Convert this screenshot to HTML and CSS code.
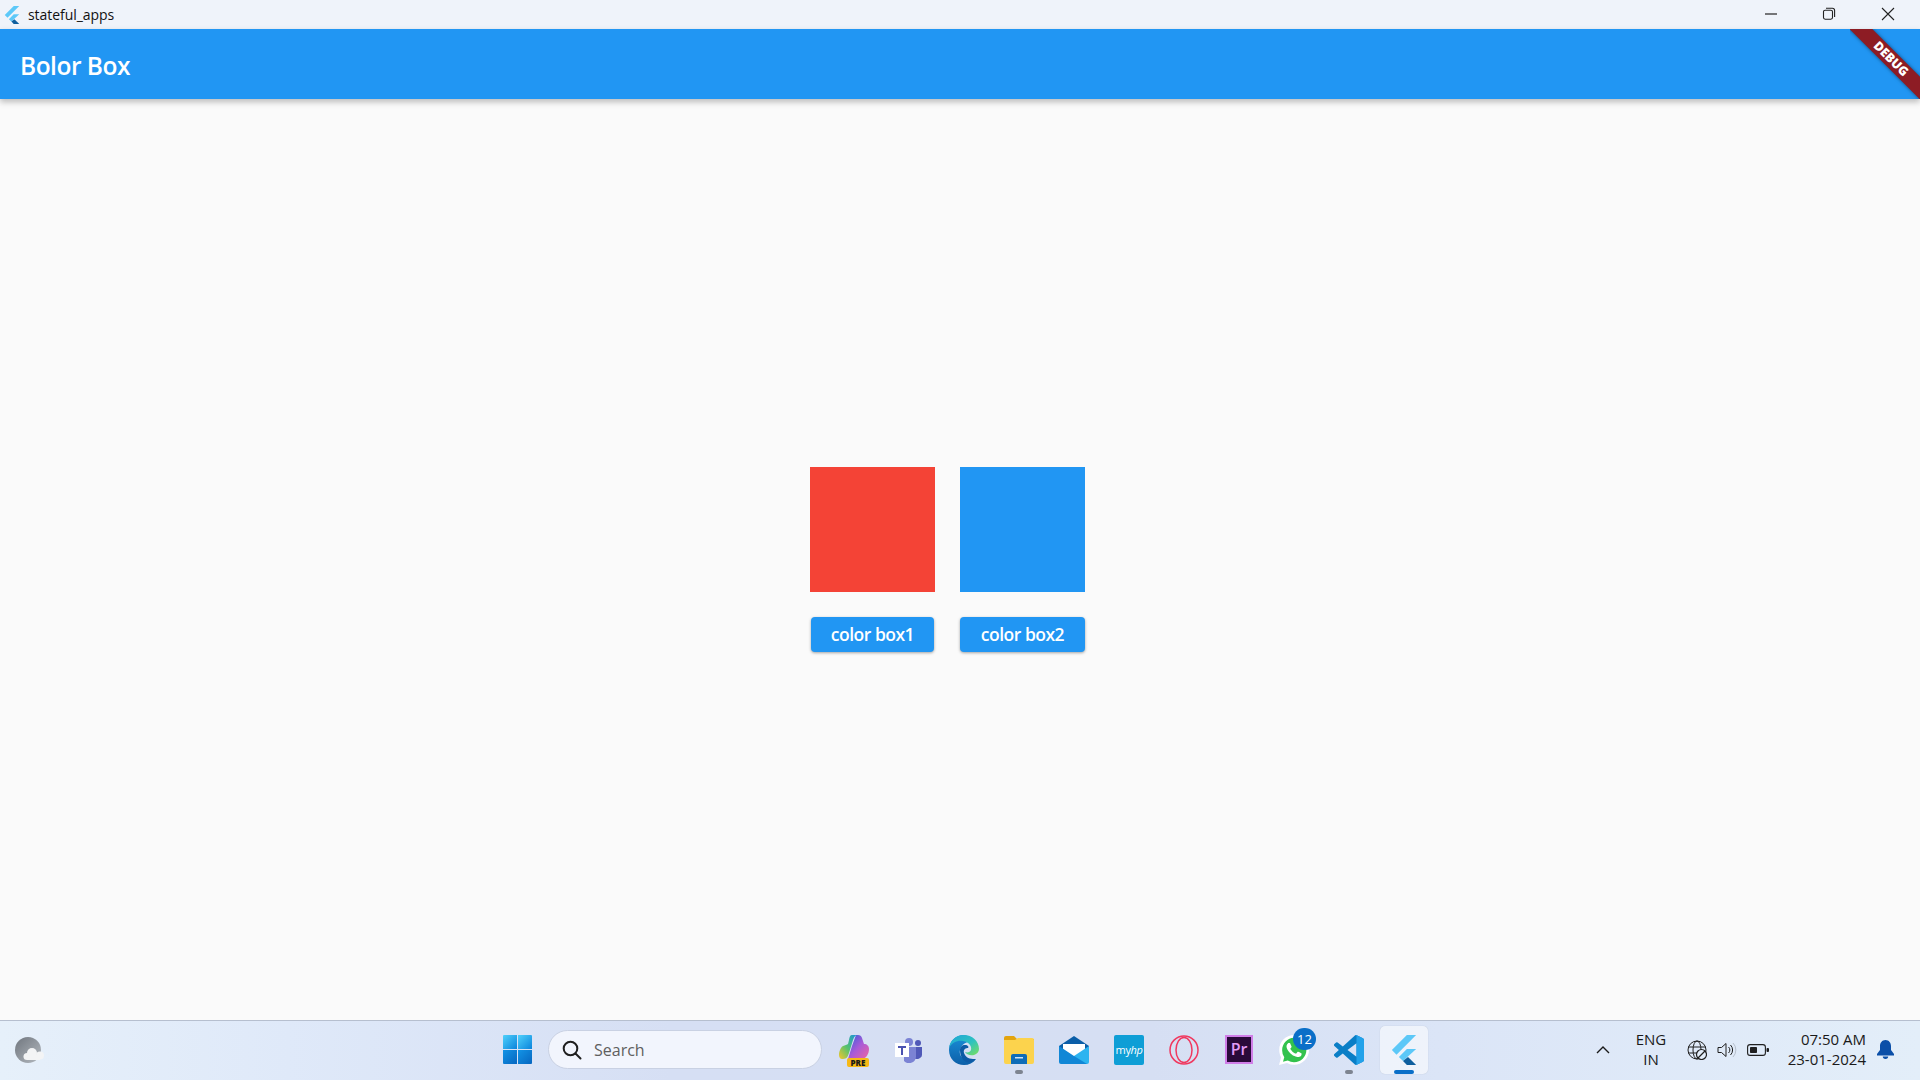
FILE: index.html
```html
<!DOCTYPE html>
<html lang="en">
<head>
    <meta charset="UTF-8">
    <meta name="viewport" content="width=device-width, initial-scale=1.0">
    <title>stateful_apps</title>
    <link rel="stylesheet" href="styles.css">
</head>
<body>

    <!-- Window title bar -->
    <div class="titlebar">
        <svg class="title-logo" viewBox="0 0 24 24">
            <path fill="#5cc8f8" d="M14.3 0L2.3 12 6 15.7 21.7 0z"/>
            <path fill="#5cc8f8" d="M14.3 11.1L7.9 17.500l3.300 3.300 10.500-9.700z"/>
            <path fill="#0f5f9e" d="M11.200 20.800l3.100 3.200h7.400l-6.500-6.500z"/>
        </svg>
        <span class="title-text">stateful_apps</span>
        <div class="window-controls">
            <div class="control">
                <svg width="14" height="14" viewBox="0 0 14 14"><path d="M1 7h12" stroke="#222" stroke-width="1.2"/></svg>
            </div>
            <div class="control">
                <svg width="14" height="14" viewBox="0 0 14 14" fill="none" stroke="#222" stroke-width="1.1"><rect x="1.500" y="3.200" width="9" height="9" rx="1.600"/><path d="M4 1.300h6.400a2.200 2.200 0 0 1 2.200 2.200V10"/></svg>
            </div>
            <div class="control">
                <svg width="14" height="14" viewBox="0 0 14 14"><path d="M1 1l12 12M13 1L1 13" stroke="#222" stroke-width="1.1"/></svg>
            </div>
        </div>
    </div>

    <!-- Flutter app -->
    <header class="appbar">
        <h1 class="appbar-title">Bolor Box</h1>
        <div class="debug-banner">
            <div class="debug-ribbon">DEBUG</div>
        </div>
    </header>

    <main class="content">
        <div class="box-row">
            <div class="box-col">
                <div class="box box-red"></div>
                <button class="box-btn box-btn-first">color box1</button>
            </div>
            <div class="box-col">
                <div class="box box-blue"></div>
                <button class="box-btn">color box2</button>
            </div>
        </div>
    </main>

    <!-- Windows taskbar -->
    <footer class="taskbar">
        <svg class="weather" viewBox="0 0 30 28">
            <defs>
                <linearGradient id="moon" x1="0" y1="0" x2="1" y2="1"><stop offset="0" stop-color="#70767e"/><stop offset="1" stop-color="#b4bac0"/></linearGradient>
            </defs>
            <circle cx="13" cy="13" r="13" fill="url(#moon)"/>
            <g fill="#f3f4f5">
                <circle cx="17" cy="16" r="5"/>
                <circle cx="12" cy="19.500" r="3.500"/>
                <circle cx="25" cy="18.500" r="4"/>
                <rect x="12" y="18" width="13" height="5" />
            </g>
        </svg>

        <div class="apps">
            <div class="app">
                <svg width="29" height="29" viewBox="0 0 29 29">
                    <defs>
                        <linearGradient id="winA" x1="0" y1="0" x2="1" y2="1"><stop offset="0" stop-color="#4fd0fb"/><stop offset="1" stop-color="#0a84dc"/></linearGradient>
                        <linearGradient id="winB" x1="0" y1="0" x2="1" y2="1"><stop offset="0" stop-color="#1394e6"/><stop offset="1" stop-color="#0666c0"/></linearGradient>
                    </defs>
                    <path fill="url(#winA)" d="M1 0h13v14H0V1a1 1 0 0 1 1-1z"/>
                    <path fill="url(#winA)" d="M15 0h13a1 1 0 0 1 1 1v13H15z"/>
                    <path fill="url(#winB)" d="M0 15h14v14H1a1 1 0 0 1-1-1z"/>
                    <path fill="url(#winB)" d="M15 15h14v13a1 1 0 0 1-1 1H15z"/>
                </svg>
            </div>

            <div class="search">
                <svg width="20" height="20" viewBox="0 0 20 20" fill="none" stroke="#1f1f1f" stroke-width="2"><circle cx="8.500" cy="8.500" r="6.800"/><path d="M13.500 13.500l5 5" stroke-linecap="round"/></svg>
                <span class="search-text">Search</span>
            </div>

            <div class="app">
                <svg width="30" height="24" viewBox="0 0 30 24" class="copilot">
                    <defs>
                        <linearGradient id="copA" x1="0" y1="1" x2="1" y2="0"><stop offset="0" stop-color="#f5c72c"/><stop offset=".45" stop-color="#56c26e"/><stop offset="1" stop-color="#1790e0"/></linearGradient>
                        <linearGradient id="copB" x1="0" y1="0" x2="1" y2="1"><stop offset="0" stop-color="#2b5fd8"/><stop offset=".5" stop-color="#a85ad8"/><stop offset="1" stop-color="#f0649f"/></linearGradient>
                    </defs>
                    <path fill="url(#copB)" d="M17 0h2c2 0 3.500 1 4 3l2 6c3 0 5 2 5 5 0 5-3 10-8 10H9l4-13z"/>
                    <path fill="url(#copA)" d="M13 0h6c-3 0-4 2-5 5l-4 13c-1 3-2 6-6 6H3c-2 0-3-2-3-4 0-4 2-8 4-9 2-1 4-1 5-2l1-4c.500-3 1-5 3-5z"/>
                </svg>
                <span class="pre-badge">PRE</span>
            </div>

            <div class="app">
                <svg width="28" height="26" viewBox="0 0 28 26">
                    <circle cx="14" cy="5" r="4" fill="#7b83d4"/>
                    <circle cx="23" cy="6" r="3" fill="#5059b8"/>
                    <path fill="#5059b8" d="M19 10h8v8a5 5 0 0 1-8 3z"/>
                    <path fill="#7b83d4" d="M9 10h12v10a7 7 0 0 1-12 4z"/>
                    <rect x="0" y="6" width="14" height="14" fill="#fff"/>
                    <path fill="#4a52b0" d="M3 9h8v2H8v7H6v-7H3z"/>
                </svg>
            </div>

            <div class="app">
                <svg width="30" height="30" viewBox="0 0 30 30">
                    <defs>
                        <linearGradient id="edgeA" x1="0" y1="0" x2="1" y2="1"><stop offset="0" stop-color="#1fa4d8"/><stop offset=".55" stop-color="#2dc2c0"/><stop offset="1" stop-color="#7be05c"/></linearGradient>
                        <linearGradient id="edgeB" x1="0" y1="0" x2="0" y2="1"><stop offset="0" stop-color="#1a8fd8"/><stop offset="1" stop-color="#0c5fa8"/></linearGradient>
                    </defs>
                    <path fill="url(#edgeB)" d="M15 0C6 0 0 7 0 15c0 9 7 15 15 15 5 0 9-2 12-6-3 2-7 2-10 1-5-2-7-6-6-10 1-5 6-9 12-8C21 3 18 0 15 0z"/>
                    <path fill="url(#edgeA)" d="M15 0C6 0 1 6 0 13c3-6 9-8 14-7 6 1 9 5 8 9-1 2-3 3-6 2 1 2 5 4 9 3 3-1 5-3 5-6C30 6 23 0 15 0z"/>
                    <path fill="#0d5aa5" d="M11 15c0-3 2-5 5-5 3 0 4 2 3 3-2 0-5 1-4 5 1 3 4 6 9 6 2 0 3 0 3 0-3 3-7 4-10 3-4-2-6-7-6-12z"/>
                </svg>
            </div>

            <div class="app">
                <svg width="30" height="28" viewBox="0 0 30 28">
                    <path fill="#e3a40e" d="M0 2a2 2 0 0 1 2-2h8l3 3h17v6H0z"/>
                    <path fill="#fcd34d" d="M0 4h11l3-2h14a2 2 0 0 1 2 2v22a2 2 0 0 1-2 2H2a2 2 0 0 1-2-2z"/>
                    <path fill="#0e6cb8" d="M7 20a2 2 0 0 1 2-2h12a2 2 0 0 1 2 2v8H7z"/>
                    <rect x="11" y="21" width="8" height="1.500" fill="#cde4f6"/>
                </svg>
                <span class="run-dot"></span>
            </div>

            <div class="app">
                <svg width="30" height="28" viewBox="0 0 30 28">
                    <path fill="#0b5ea8" d="M15 0l15 10v4H0v-4z"/>
                    <path fill="#fff" d="M4 8h22v9l-11 6-11-6z"/>
                    <path fill="#2db4f0" d="M30 10v16a2 2 0 0 1-2 2H15V20z"/>
                    <path fill="#1187d6" d="M0 10l15 10 13 8H2a2 2 0 0 1-2-2z"/>
                </svg>
            </div>

            <div class="app">
                <div class="hp-tile">my<i>hp</i></div>
            </div>

            <div class="app">
                <svg width="30" height="30" viewBox="0 0 30 30" fill="none" stroke="#f0385f" stroke-width="1.500">
                    <circle cx="15" cy="15" r="14"/>
                    <ellipse cx="15" cy="15" rx="8" ry="12.500"/>
                </svg>
            </div>

            <div class="app">
                <div class="pr-tile">Pr</div>
            </div>

            <div class="app">
                <svg width="30" height="30" viewBox="0 0 24 24">
                    <path fill="#fff" d="M20.500 3.500A11.800 11.800 0 0 0 12 0C5.500 0 .2 5.300.2 11.900c0 2.100.5 4.100 1.500 5.900L0 24l6.400-1.700a11.900 11.900 0 0 0 5.700 1.500c6.500 0 11.900-5.300 11.900-11.900a11.800 11.800 0 0 0-3.500-8.400z"/>
                    <path fill="#33c24d" d="M12 21.800a9.900 9.900 0 0 1-5-1.400l-3.800 1 1-3.600a9.900 9.900 0 0 1-1.700-5.600C2.500 6.700 6.900 2.100 12 2.100c5.500 0 10 4.400 9.900 9.900 0 5.400-4.400 9.800-9.900 9.800z"/>
                    <path fill="#fff" d="M17.472 14.382c-.297-.149-1.758-.867-2.030-.967-.273-.099-.471-.148-.67.150-.197.297-.767.966-.940 1.164-.173.199-.347.223-.644.075-.297-.150-1.255-.463-2.390-1.475-.883-.788-1.480-1.761-1.653-2.059-.173-.297-.018-.458.130-.606.134-.133.298-.347.446-.520.149-.174.198-.298.298-.497.099-.198.050-.371-.025-.520-.075-.149-.669-1.612-.916-2.207-.242-.579-.487-.500-.669-.510-.173-.008-.371-.010-.570-.010-.198 0-.520.074-.792.372-.272.297-1.040 1.016-1.040 2.479 0 1.462 1.065 2.875 1.213 3.074.149.198 2.096 3.200 5.077 4.487.709.306 1.262.489 1.694.625.712.227 1.360.195 1.871.118.571-.085 1.758-.719 2.006-1.413.248-.694.248-1.289.173-1.413-.074-.124-.272-.198-.570-.347"/>
                </svg>
                <span class="count-badge">12</span>
            </div>

            <div class="app">
                <svg width="30" height="30" viewBox="0 0 24 24">
                    <path fill="#0a7ec6" d="M23.150 2.587L18.210.210a1.494 1.494 0 0 0-1.705.290l-9.460 8.630-4.120-3.128a.999.999 0 0 0-1.276.057L.327 7.261A1 1 0 0 0 .326 8.740L3.899 12 .326 15.260a1 1 0 0 0 .001 1.479L1.650 17.940a.999.999 0 0 0 1.276.057l4.120-3.128 9.460 8.630a1.492 1.492 0 0 0 1.704.290l4.942-2.377A1.500 1.500 0 0 0 24 20.060V3.939a1.500 1.500 0 0 0-.850-1.352zm-5.146 14.861L10.826 12l7.178-5.448v10.896z"/>
                    <path fill="#23a2ea" d="M16.500.5a1.494 1.494 0 0 1 1.710-.29l4.940 2.377A1.500 1.500 0 0 1 24 3.939V20.060a1.500 1.500 0 0 1-.850 1.353l-4.942 2.377a1.492 1.492 0 0 1-1.704-.290c.6.600 1.500.200 1.500-.500V1c0-.700-.900-1.100-1.500-.500z"/>
                </svg>
                <span class="run-dot"></span>
            </div>

            <div class="app app-active">
                <svg width="26" height="30" viewBox="2 0 20 24">
                    <path fill="#5cc8f8" d="M14.300 0L2.300 12 6 15.700 21.700 0z"/>
                    <path fill="#5cc8f8" d="M14.300 11.100L7.900 17.500l3.300 3.300 10.500-9.700z"/>
                    <path fill="#0f5f9e" d="M11.200 20.800l3.100 3.200h7.400l-6.500-6.500z"/>
                </svg>
                <span class="run-bar"></span>
            </div>
        </div>

        <div class="tray">
            <svg class="tray-chevron" width="14" height="8" viewBox="0 0 14 8" fill="none" stroke="#1a1a1a" stroke-width="1.400"><path d="M1 7l6-6 6 6"/></svg>
            <div class="tray-lang">
                <span>ENG</span>
                <span>IN</span>
            </div>
            <div class="tray-icons">
                <svg width="20" height="20" viewBox="0 0 20 20" fill="none" stroke="#1f1f1f" stroke-width="1">
                    <circle cx="10" cy="10" r="9"/><ellipse cx="10" cy="10" rx="4" ry="9"/><path d="M1 7h18M1 13h18"/>
                    <circle cx="14.500" cy="14.500" r="5" fill="#e3edf9" stroke="#1f1f1f" stroke-width="1.200"/><path d="M11 18l7-7" stroke-width="1.200"/>
                </svg>
                <svg width="20" height="18" viewBox="0 0 20 18" fill="none" stroke="#1f1f1f" stroke-width="1">
                    <path d="M1 6.500h3.500L9 2.500v13L4.500 11.500H1z"/><path d="M11.500 6a4 4 0 0 1 0 6M13.500 4a7 7 0 0 1 0 10"/><path d="M16 2a10 10 0 0 1 0 14" stroke="#b8c0cc"/>
                </svg>
                <svg width="22" height="12" viewBox="0 0 22 12">
                    <rect x=".6" y=".6" width="17.800" height="10.800" rx="2.500" fill="none" stroke="#1f1f1f" stroke-width="1.100"/>
                    <rect x="3" y="3" width="7" height="6" rx=".8" fill="#1f1f1f"/>
                    <rect x="19.500" y="4" width="2.500" height="4" rx="1" fill="#1f1f1f"/>
                </svg>
            </div>
            <div class="tray-clock">
                <span>07:50 AM</span>
                <span>23-01-2024</span>
            </div>
            <svg class="tray-bell" width="17" height="19" viewBox="0 0 17 19">
                <path fill="#0b4fa8" d="M8.500 0C5 0 3 3 3 6v4l-3 4v1.500h17V14l-3-4V6c0-3-2-6-5.500-6z"/>
                <path fill="#0b4fa8" d="M5.800 16.500h5.400a2.700 2.400 0 0 1-5.400 0z"/>
            </svg>
        </div>
    </footer>

</body>
</html>
```

FILE: styles.css
```css
* {
    box-sizing: border-box;
}

html, body {
    height: 100%;
}

body {
    margin: 0;
    display: flex;
    flex-direction: column;
    overflow: hidden;
    background: #fafafa;
    font-family: "Open Sans", "Noto Sans", sans-serif;
}

/* title bar */
.titlebar {
    height: 29px;
    display: flex;
    align-items: center;
    background: #eff3fa;
    color: #111;
}

.title-logo {
    width: 18px;
    height: 20px;
    margin-left: 3px;
}

.title-text {
    margin-left: 7px;
    margin-top: -1px;
    font-size: 14px;
    letter-spacing: -0.05px;
}

.window-controls {
    margin-left: auto;
    margin-top: -1px;
    display: flex;
    padding-right: 3px;
}

.control {
    width: 58.5px;
    display: flex;
    justify-content: center;
}

/* app bar */
.appbar {
    position: relative;
    z-index: 1;
    height: 70px;
    display: flex;
    align-items: center;
    padding: 2px 20px 0;
    background: #2196f3;
    box-shadow: 0 3px 6px rgba(0, 0, 0, 0.25);
}

.appbar-title {
    margin: 0;
    font-size: 24.5px;
    font-weight: 600;
    color: #fff;
    letter-spacing: -0.5px;
}

.debug-banner {
    position: absolute;
    top: 0;
    right: 0;
    width: 70px;
    height: 70px;
    overflow: hidden;
}

.debug-ribbon {
    position: absolute;
    left: -19.5px;
    top: 21.7px;
    width: 120px;
    height: 15.6px;
    display: flex;
    align-items: center;
    justify-content: center;
    background: #8d1c24;
    box-shadow: 0 0 4px rgba(0, 0, 0, 0.5);
    color: #fff;
    font-family: "Noto Sans", sans-serif;
    font-size: 12.5px;
    font-weight: 900;
    transform: rotate(45deg);
}

/* boxes */
.content {
    flex: 1;
    display: flex;
    align-items: center;
    justify-content: center;
    padding-right: 25px;
}

.box-row {
    display: flex;
    gap: 25px;
}

.box-col {
    display: flex;
    flex-direction: column;
    align-items: center;
    gap: 25px;
}

.box {
    width: 125px;
    height: 125px;
}

.box-red {
    background: #f44336;
}

.box-blue {
    background: #2196f3;
}

.box-btn {
    width: 125px;
    height: 35px;
    padding: 0 0 2px;
    border: none;
    border-radius: 4px;
    background: #2196f3;
    box-shadow: 0 1px 3px rgba(0, 0, 0, 0.35);
    color: #fff;
    font-family: inherit;
    font-size: 17.5px;
    font-weight: 600;
    letter-spacing: -0.5px;
}

.box-btn-first {
    width: 123px;
}

/* taskbar */
.taskbar {
    position: relative;
    height: 60px;
    display: flex;
    align-items: center;
    padding-left: 15px;
    padding-bottom: 2px;
    border-top: 1px solid #b6bfcf;
    background: linear-gradient(90deg, #e6f0fa 0%, #dfe9f9 15%, #d6dff4 35%, #d6dff3 60%, #dbe5f7 75%, #e3eef9 100%);
}

.weather {
    width: 30px;
    height: 28px;
    margin-top: 2px;
}

.apps {
    margin-left: 448px;
    display: flex;
    align-items: center;
    gap: 7px;
}

.app {
    position: relative;
    width: 48px;
    height: 48px;
    flex-shrink: 0;
    display: flex;
    align-items: center;
    justify-content: center;
}

.app-active {
    border-radius: 5px;
    background: rgba(255, 255, 255, 0.55);
    box-shadow: 0 0 1px rgba(0, 0, 0, 0.2);
}

.run-dot {
    position: absolute;
    left: 20px;
    bottom: 0;
    width: 8px;
    height: 4px;
    border-radius: 2px;
    background: #7d8490;
}

.run-bar {
    position: absolute;
    left: 14px;
    bottom: 0;
    width: 20px;
    height: 4px;
    border-radius: 2px;
    background: #0a6fc8;
}

.search {
    width: 274px;
    height: 39px;
    margin: 0 1px 0 0;
    display: flex;
    align-items: center;
    gap: 12px;
    padding-left: 13px;
    border: 1px solid #c9d1e3;
    border-radius: 20px;
    background: #f2f5fd;
}

.search-text {
    font-size: 16px;
    color: #5f5f5f;
}

.copilot {
    margin-top: -5px;
}

.pre-badge {
    position: absolute;
    left: 17px;
    top: 32px;
    width: 22px;
    height: 9px;
    border-radius: 2px;
    background: #f7b916;
    color: #1a1a1a;
    font-size: 8px;
    font-weight: 800;
    line-height: 9px;
    text-align: center;
}

.hp-tile {
    width: 30px;
    height: 30px;
    border-radius: 2px;
    background: #0e9ed6;
    color: #fff;
    font-size: 11px;
    letter-spacing: -0.4px;
    line-height: 30px;
    text-align: center;
    white-space: nowrap;
}

.pr-tile {
    width: 28px;
    height: 29px;
    border: 2px solid #d07ee8;
    background: #2a0a3a;
    color: #e29bf5;
    font-size: 16px;
    font-weight: 600;
    line-height: 25px;
    text-align: center;
}

.count-badge {
    position: absolute;
    left: 23px;
    top: 2px;
    width: 23px;
    height: 22px;
    border-radius: 11px;
    background: #0a6fc8;
    color: #fff;
    font-size: 13px;
    line-height: 22px;
    text-align: center;
}

/* tray */
.tray {
    position: absolute;
    top: 0;
    bottom: 2px;
    left: 1596px;
    right: 0;
    display: flex;
    align-items: center;
    color: #1a1a1a;
    font-size: 15px;
}

.tray-chevron {
    flex-shrink: 0;
}

.tray-lang {
    margin-left: 23px;
    width: 36px;
    display: flex;
    flex-direction: column;
    align-items: center;
    line-height: 19.5px;
}

.tray-icons {
    margin-left: 18px;
    display: flex;
    align-items: center;
    gap: 10px;
}

.tray-clock {
    margin-left: auto;
    display: flex;
    flex-direction: column;
    align-items: flex-end;
    line-height: 19.5px;
}

.tray-bell {
    margin: 0 26px 0 11px;
}
```
